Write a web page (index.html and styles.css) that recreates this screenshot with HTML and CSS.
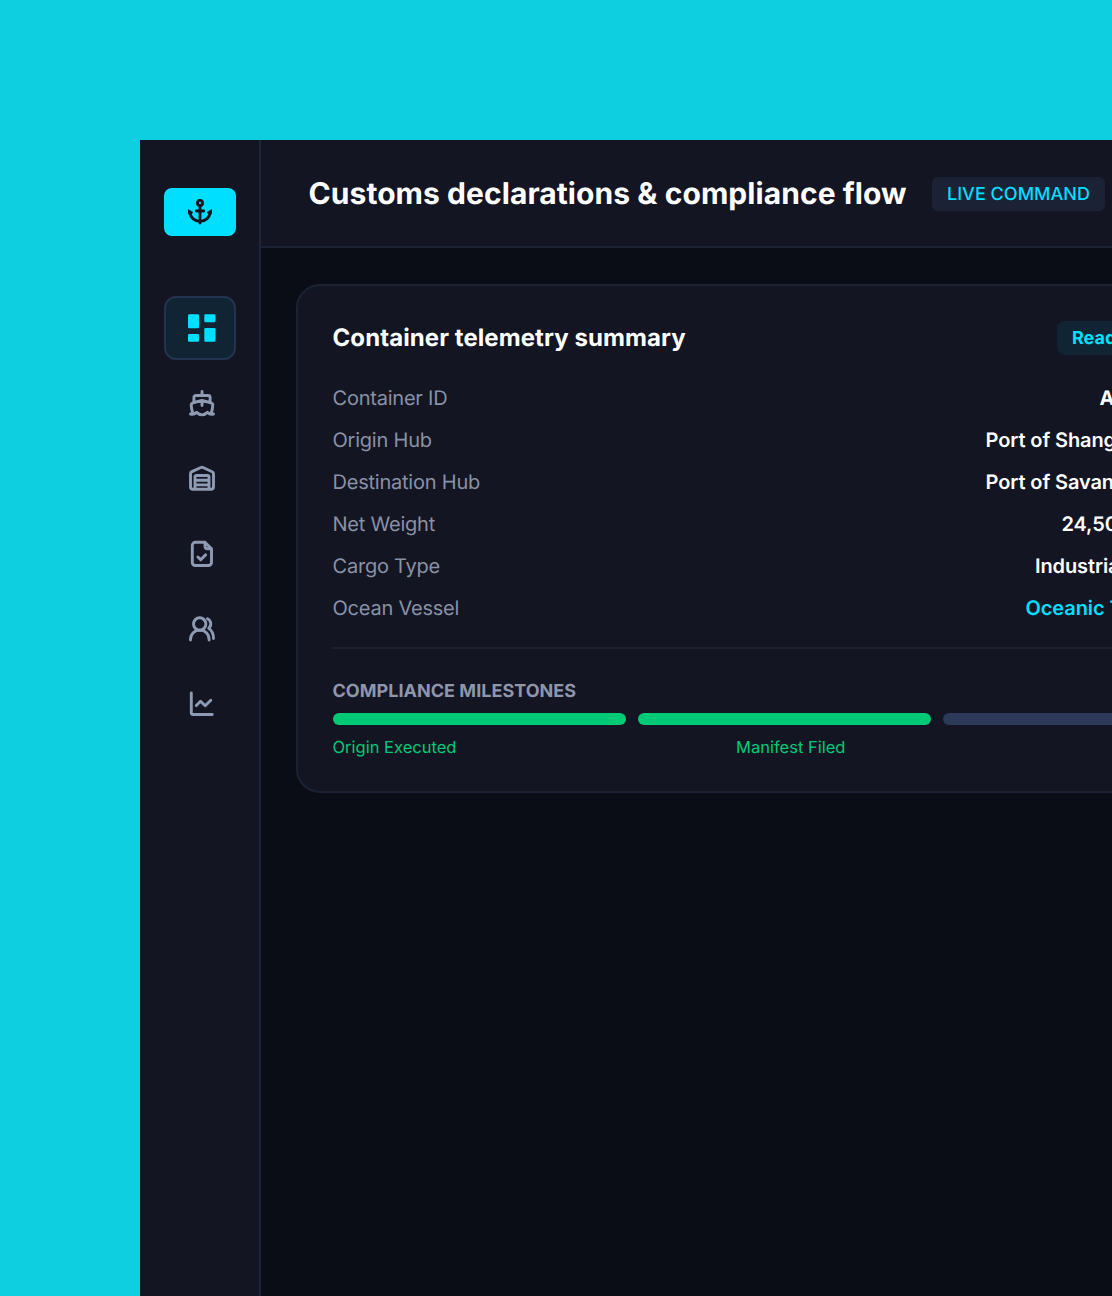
FILE: index.html
```html
<!DOCTYPE html>
<html lang="en">
<head>
<meta charset="utf-8">
<title>Customs declarations &amp; compliance flow</title>
<link rel="stylesheet" href="styles.css">
</head>
<body>
<div class="app">
  <nav class="sidebar">
    <div class="logo">
      <svg width="28" height="28" viewBox="0 0 28 28" fill="none" stroke="currentColor" stroke-width="2.900" stroke-linecap="round" stroke-linejoin="round"><circle cx="14" cy="4.900" r="2.500"/><path d="M14 7.800V25M10.300 13h7.400"/><path d="M3.800 14.400c.7 5.400 4.900 9 10.200 9s9.500-3.600 10.200-9"/><path d="M2.400 12.100l.6 4.600 3.500-2zM25.600 12.100l-.6 4.600-3.500-2z" fill="currentColor" stroke-width="1"/></svg>
    </div>
    <div class="menu">
      <a class="item active">
        <svg width="30" height="30" viewBox="0 0 30 30" fill="currentColor"><rect x="1" y="1.300" width="11" height="14" rx="1.300"/><rect x="17.300" y="1.300" width="11.200" height="8" rx="1.300"/><rect x="1" y="21" width="11" height="7.700" rx="1.300"/><rect x="17.300" y="14.900" width="11.200" height="13.800" rx="1.300"/></svg>
      </a>
      <a class="item">
        <svg width="30" height="30" viewBox="0 0 30 30"><path d="M15 2.500v4M6.900 13V8.500a2 2 0 0 1 2-2h12.200a2 2 0 0 1 2 2V13M15 12v4.500M5.600 23.500C4.600 20.500 4.200 18 4.200 15.600c0-.8.4-1.300 1.200-1.600L15 11.300l9.600 2.700c.8.300 1.200.8 1.200 1.600 0 2.400-.4 4.900-1.400 7.900M3.500 25c2.400.8 4.300.2 6.100-1.600 3.300 3.200 7.500 3.200 10.800 0 1.800 1.800 3.700 2.400 6.100 1.600"/></svg>
      </a>
      <a class="item">
        <svg width="30" height="30" viewBox="0 0 30 30"><path d="M3.500 9.800c0-1 .5-1.700 1.400-2.100l9-4.200c.8-.4 1.400-.4 2.200 0l9 4.200c.9.400 1.400 1.100 1.400 2.100v13a2.500 2.500 0 0 1-2.500 2.500H6a2.500 2.500 0 0 1-2.500-2.500zM8 25.300V13a1.500 1.500 0 0 1 1.500-1.500h11a1.500 1.500 0 0 1 1.500 1.500V25.300M8 16.200h14M8 20.900h14"/></svg>
      </a>
      <a class="item">
        <svg width="30" height="30" viewBox="0 0 30 30"><path d="M18 3.300H8.300a3 3 0 0 0-3 3v17.200a3 3 0 0 0 3 3h13.200a3 3 0 0 0 3-3V9.800zM18 3.300v4a2.500 2.500 0 0 0 2.500 2.500h4M10.900 18l2.800 2.800 4.900-4.900"/></svg>
      </a>
      <a class="item">
        <svg width="30" height="30" viewBox="0 0 30 30"><circle cx="12.700" cy="10" r="6.200"/><path d="M3.500 26v-.6a9.300 9.300 0 0 1 18.600 0v.6M20.500 4.700c3.800 1.700 4.300 7 1.300 9.700 3.200 2.200 4.700 5.700 4.700 10.100"/></svg>
      </a>
      <a class="item">
        <svg width="30" height="30" viewBox="0 0 30 30"><path d="M4.300 4v19.800a1.700 1.700 0 0 0 1.700 1.700h19.200M9.300 16.500l4.200-4.300 4.700 4.600 5.600-5.600"/></svg>
      </a>
    </div>
  </nav>
  <main class="main">
    <header class="topbar">
      <h1>Customs declarations &amp; compliance flow</h1>
      <span class="tag">LIVE COMMAND</span>
    </header>
    <section class="card">
      <div class="card-head">
        <h2>Container telemetry summary</h2>
        <span class="status">Ready</span>
      </div>
      <dl class="details">
        <div class="row"><dt>Container ID</dt><dd class="id">A</dd></div>
        <div class="row"><dt>Origin Hub</dt><dd class="port">Port of Shanghai</dd></div>
        <div class="row"><dt>Destination Hub</dt><dd class="port">Port of Savannah</dd></div>
        <div class="row"><dt>Net Weight</dt><dd class="weight">24,500 kg</dd></div>
        <div class="row"><dt>Cargo Type</dt><dd class="cargo">Industrial</dd></div>
        <div class="row"><dt>Ocean Vessel</dt><dd class="vessel">Oceanic T</dd></div>
      </dl>
      <div class="milestones">
        <h3>COMPLIANCE MILESTONES</h3>
        <div class="bars"><i class="done"></i><i class="done"></i><i></i></div>
        <div class="labels"><span>Origin Executed</span><span>Manifest Filed</span><span class="next"></span></div>
      </div>
    </section>
  </main>
</div>
</body>
</html>
```
FILE: styles.css
```css
* { box-sizing: border-box; }
html, body { height: 100%; overflow: hidden; }
body {
  margin: 0;
  padding: 140px 0 0 140px;
  background: #0dcfe0;
  font-family: Inter, "Liberation Sans", sans-serif;
  text-rendering: geometricPrecision;
  color: #fff;
}
h1, h2, h3, dl, dd { margin: 0; }
.app { display: flex; width: 1168px; height: 1156px; background: #0a0d15; }
.sidebar {
  flex: none;
  width: 120.5px;
  padding: 48px 23px 0 24px;
  background: #131523;
  border-right: 2px solid #1c2539;
}
.logo {
  display: flex; align-items: center; justify-content: center;
  width: 72px; height: 48px; border-radius: 8px;
  background: #00dfff; color: #11131f;
}
.menu { display: flex; flex-direction: column; gap: 12px; margin-top: 60px; }
.item {
  display: flex; align-items: center; justify-content: center;
  width: 72px; height: 63.2px; padding-left: 3px;
  border-radius: 12px; color: #8f9bb3;
}
.item svg { fill: none; stroke: currentColor; stroke-width: 2.900; stroke-linecap: round; stroke-linejoin: round; }
.item.active { background: #112433; border: 2px solid #24334f; color: #00dfff; height: 64px; }
.item.active svg { fill: currentColor; stroke: none; }
.main { flex: 1; min-width: 0; }
.topbar {
  display: flex; align-items: center; gap: 26px;
  height: 108px; padding: 2px 48px 0; background: #131523;
  border-bottom: 2px solid #1a2234; white-space: nowrap;
}
h1 { width: 597.500px; font-size: 30px; line-height: 36px; font-weight: 700; letter-spacing: .07px; }
.tag {
  height: 34px; padding: 0 15px; border-radius: 6px;
  background: #1b2236; color: #00dfff;
  font-size: 18px; line-height: 36px; font-weight: 550; letter-spacing: .02px;
}
.card {
  width: 976px; height: 509px; margin: 36px 0 0 35.500px;
  padding: 34px 34px 34px 34.500px; background: #131523;
  border: 2px solid #1a2234; border-radius: 24px;
}
.card-head { display: flex; justify-content: space-between; align-items: center; height: 36px; }
h2 { font-size: 24px; line-height: 30px; font-weight: 700; letter-spacing: .08px; }
.status {
  width: 179px; height: 34px; padding-left: 15px; border-radius: 8px;
  background: #112433; color: #00dfff;
  font-size: 18px; line-height: 36px; font-weight: 650;
}
.details { display: flex; flex-direction: column; gap: 12px; margin-top: 27px; }
.row { display: flex; justify-content: space-between; height: 30px; font-size: 20px; line-height: 30px; white-space: nowrap; }
dt { color: #8a91a5; font-weight: 400; letter-spacing: -.22px; }
dd { font-weight: 600; letter-spacing: -.1px; }
.id { width: 136.500px; font-weight: 700; }
.port { width: 250.500px; }
.weight { width: 174.500px; }
.cargo { width: 201px; }
.vessel { width: 210.500px; color: #00dfff; }
.milestones { margin-top: 24px; padding-top: 29.500px; border-top: 2px solid #1a2234; }
h3 { color: #8f96aa; font-size: 18px; line-height: 26px; font-weight: 650; letter-spacing: .03px; }
.bars { display: grid; grid-template-columns: repeat(3, 293px); gap: 12px; margin-top: 8.500px; }
.bars i { height: 12px; border-radius: 6px; background: #2c3958; }
.bars .done { background: #00ca76; }
.labels { display: flex; justify-content: space-between; margin-top: 10px; color: #00ca76; font-size: 16.500px; line-height: 24px; font-weight: 380; }
.next { width: 111px; }
```
